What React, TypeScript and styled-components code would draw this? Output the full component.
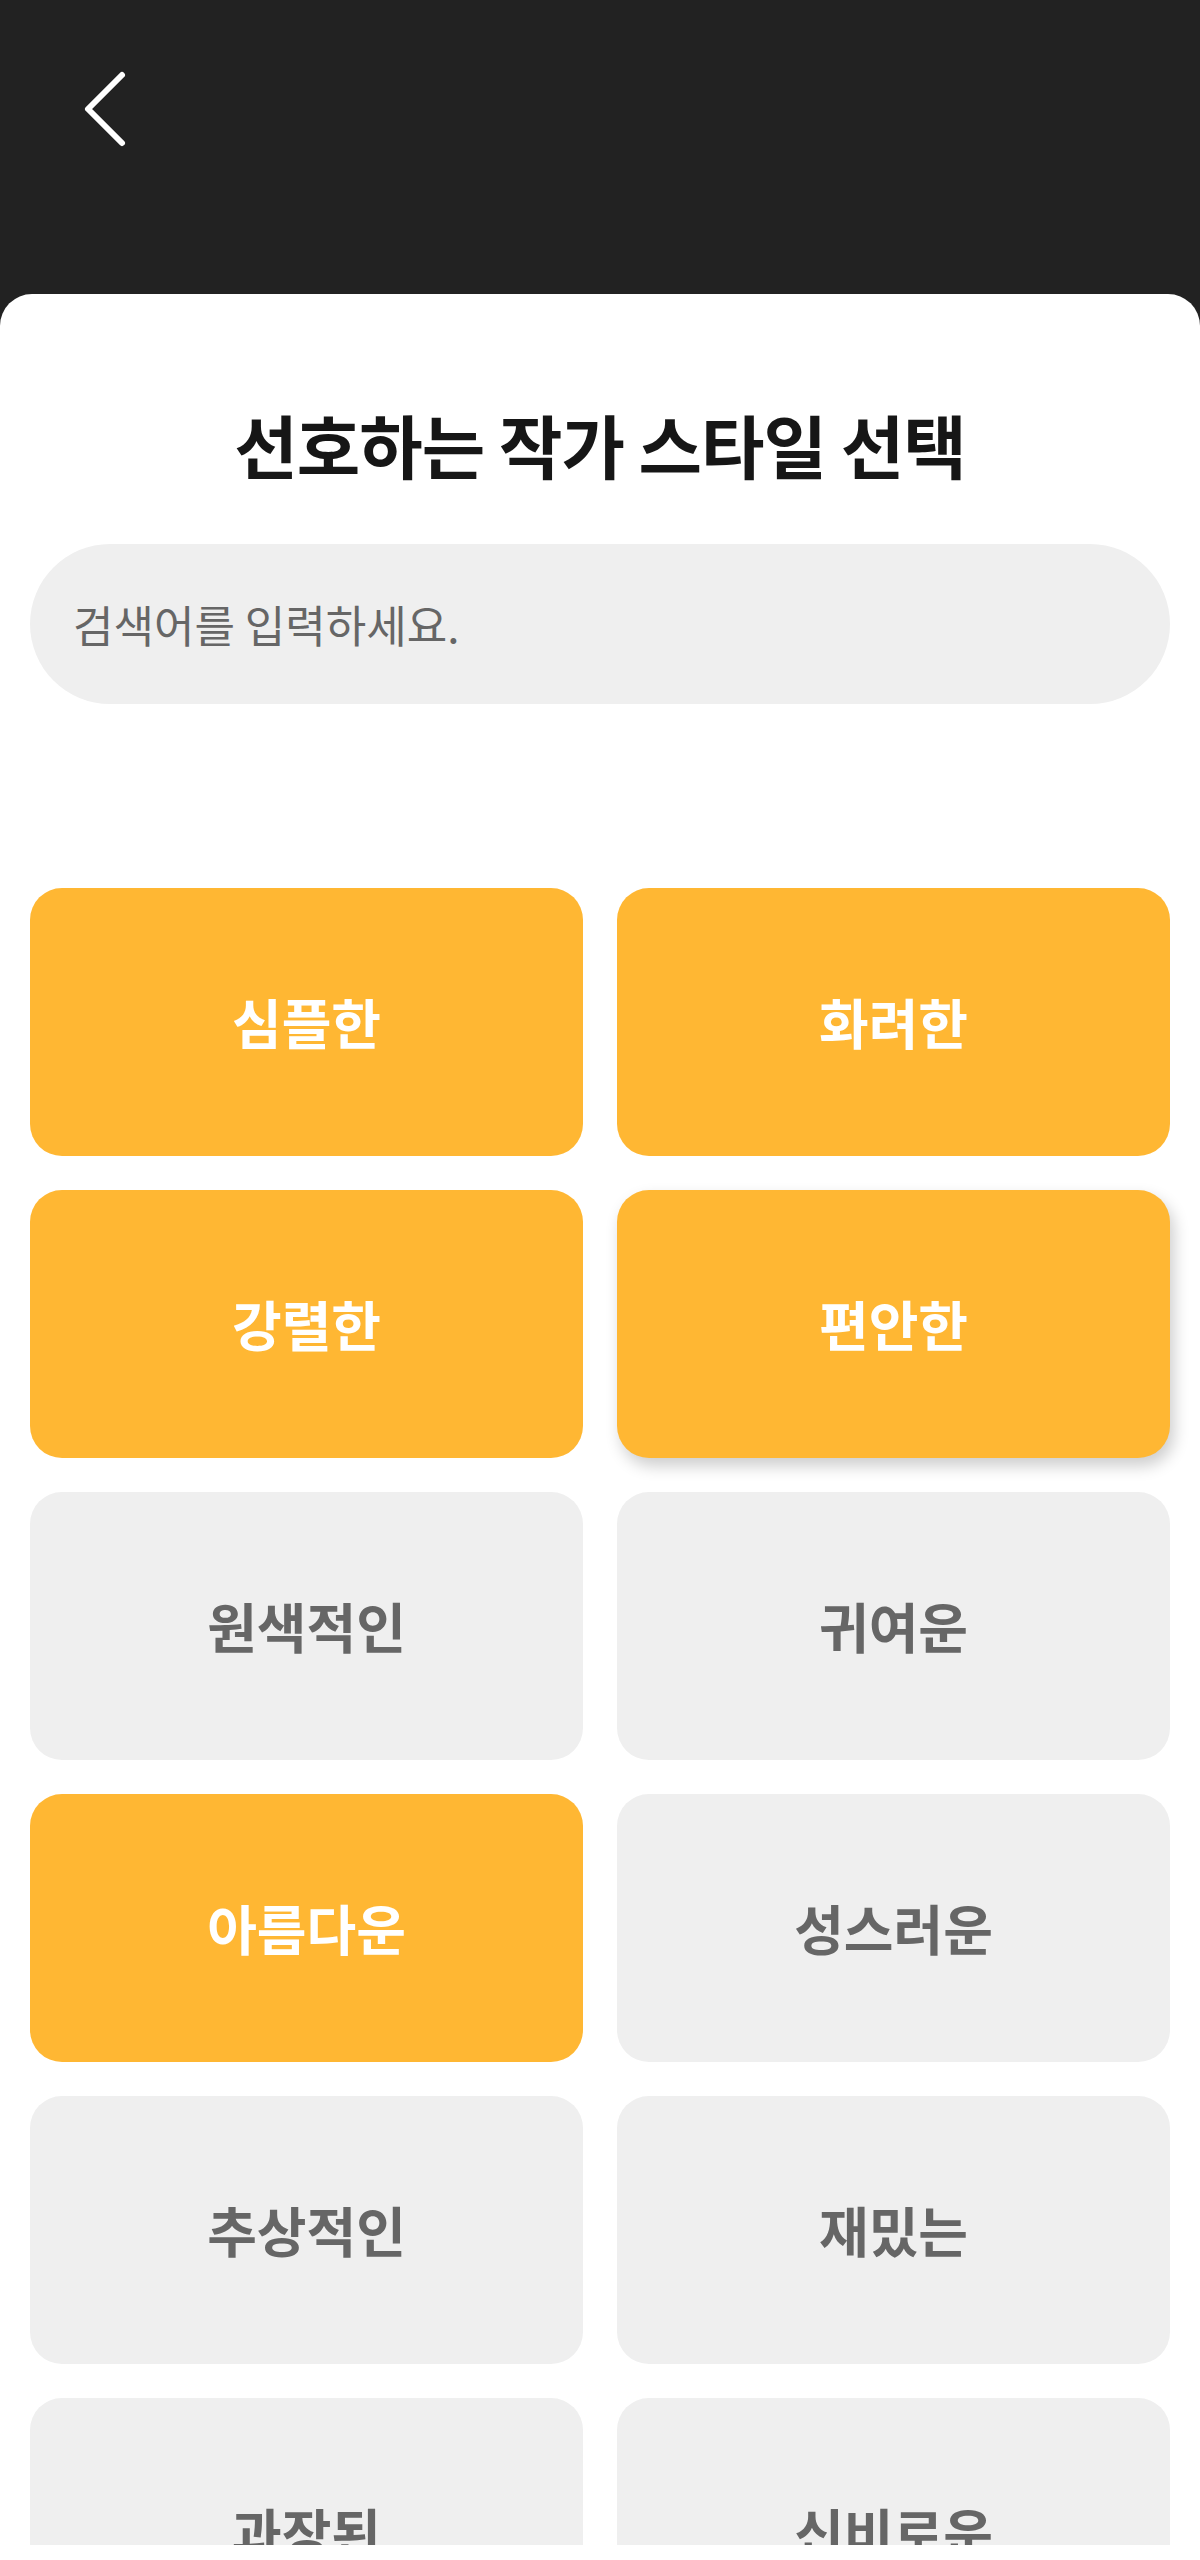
import React from "react";
import styled, { createGlobalStyle, css } from "styled-components";

const GlobalStyle = createGlobalStyle`
  html, body {
    margin: 0;
    padding: 0;
    background: #ffffff;
  }
  * { box-sizing: border-box; }
  body {
    font-family: "Noto Sans CJK KR", "Noto Sans", sans-serif;
  }
`;

const Screen = styled.div`
  width: 1200px;
  height: 2545px;
  background: #222222;
  display: flex;
  flex-direction: column;
  overflow: hidden;
`;

const Header = styled.header`
  height: 294px;
  flex: none;
  padding: 68px 0 0 82px;
`;

const BackButton = styled.button`
  display: block;
  width: 48px;
  height: 82px;
  padding: 0;
  border: none;
  background: transparent;
  cursor: pointer;
`;

const Sheet = styled.main`
  flex: 1;
  min-height: 0;
  background: #ffffff;
  border-radius: 32px 32px 0 0;
  padding: 108px 30px 0;
  overflow: hidden;
`;

const Title = styled.h1`
  margin: 0;
  text-align: center;
  font-size: 69px;
  line-height: 84px;
  font-weight: 700;
  color: #161616;
  letter-spacing: -1px;
`;

const SearchInput = styled.input`
  display: block;
  margin-top: 58px;
  width: 100%;
  height: 160px;
  border: none;
  outline: none;
  border-radius: 80px;
  background: #efefef;
  padding: 0 40px 0 43px;
  font-family: inherit;
  font-size: 44px;
  color: #333;
  &::placeholder {
    color: #666666;
  }
`;

const Grid = styled.div`
  margin-top: 184px;
  display: grid;
  grid-template-columns: 1fr 1fr;
  column-gap: 34px;
  row-gap: 34px;
`;

const Card = styled.button<{ $selected: boolean; $raised?: boolean }>`
  height: 268px;
  border: none;
  border-radius: 32px;
  display: flex;
  align-items: center;
  justify-content: center;
  font-family: inherit;
  font-size: 54px;
  font-weight: 700;
  line-height: 1;
  cursor: pointer;
  ${({ $selected }) =>
    $selected
      ? css`
          background: #ffb733;
          color: #ffffff;
        `
      : css`
          background: #efefef;
          color: #666666;
        `}
  ${({ $raised }) =>
    $raised &&
    css`
      box-shadow: 4px 8px 16px rgba(0, 0, 0, 0.2);
    `}
`;

const styles = [
  { label: "심플한", selected: true },
  { label: "화려한", selected: true },
  { label: "강렬한", selected: true },
  { label: "편안한", selected: true, raised: true },
  { label: "원색적인", selected: false },
  { label: "귀여운", selected: false },
  { label: "아름다운", selected: true },
  { label: "성스러운", selected: false },
  { label: "추상적인", selected: false },
  { label: "재밌는", selected: false },
  { label: "과장된", selected: false },
  { label: "신비로운", selected: false },
];

export default function App() {
  return (
    <>
      <GlobalStyle />
      <Screen>
        <Header>
          <BackButton aria-label="뒤로">
            <svg width="48" height="82" viewBox="0 0 48 82" fill="none">
              <polyline
                points="40,7 6,41 40,75"
                stroke="#ffffff"
                strokeWidth="6"
                strokeLinecap="round"
                strokeLinejoin="round"
              />
            </svg>
          </BackButton>
        </Header>
        <Sheet>
          <Title>선호하는 작가 스타일 선택</Title>
          <SearchInput placeholder="검색어를 입력하세요." />
          <Grid>
            {styles.map((s) => (
              <Card key={s.label} $selected={s.selected} $raised={s.raised}>
                {s.label}
              </Card>
            ))}
          </Grid>
        </Sheet>
      </Screen>
    </>
  );
}
